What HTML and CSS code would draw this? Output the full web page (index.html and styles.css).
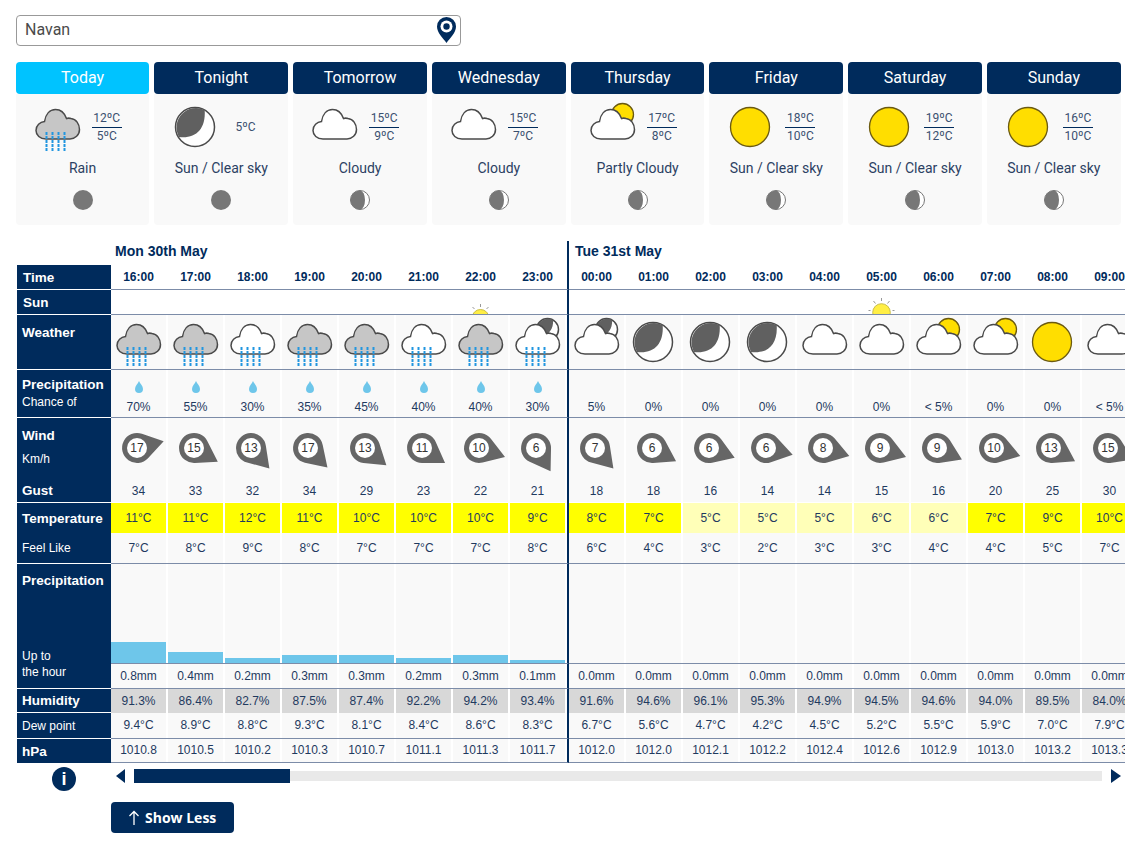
FILE: index.html
```html
<!DOCTYPE html>
<html lang="en">
<head>
    <meta charset="UTF-8">
    <meta name="viewport" content="width=device-width, initial-scale=1.0">
    <title>Navan - Forecast</title>
    <link rel="stylesheet" href="styles.css">
</head>
<body>
    <svg class="sprite" width="0" height="0">
        <defs>
            <path id="cloud-shape" d="M16 39C10 39 6 35 6 30.500 6 25.500 10 22 14.500 21.500 15.500 14.500 19.500 9.500 25.500 9.500 30.500 9.500 34.500 13 36.500 18.500 38 18 39.500 18 41 18.500 46 19 49.500 24 49.500 29.500 49.500 35 45 39 40 39Z"/>
            <path id="moon-shape" d="M36.700 10A19.500 19.500 0 0 0 11 37C27 39 38 30 36.700 10Z"/>
            <g id="rain-lines" class="rain">
                <path d="M16.500 32V51M22.500 32V51M28.500 32V51M34.500 32V51"/>
            </g>
            <symbol id="cloud" viewBox="0 0 55 54">
                <use href="#cloud-shape" class="cl-white"/>
            </symbol>
            <symbol id="rain-grey" viewBox="0 0 55 54">
                <use href="#cloud-shape" class="cl-grey"/>
                <use href="#rain-lines"/>
            </symbol>
            <symbol id="rain-white" viewBox="0 0 55 54">
                <use href="#cloud-shape" class="cl-white"/>
                <use href="#rain-lines"/>
            </symbol>
            <symbol id="sun" viewBox="0 0 55 54">
                <circle cx="27" cy="27" r="19.500" class="sun-fill"/>
            </symbol>
            <symbol id="moon" viewBox="0 0 55 54">
                <circle cx="27" cy="27" r="19.500" class="cl-white"/>
                <use href="#moon-shape" class="moon-dark"/>
            </symbol>
            <symbol id="part-sun" viewBox="0 0 55 54">
                <circle cx="37.500" cy="14.500" r="11" class="sun-fill"/>
                <use href="#cloud-shape" class="cl-white"/>
            </symbol>
            <g id="small-moon">
                <circle cx="37.500" cy="14.500" r="11" class="cl-white"/>
                <path d="M43 5A11 11 0 0 0 28.500 20.500C37 22 44 15 43 5Z" class="moon-dark"/>
            </g>
            <symbol id="part-moon" viewBox="0 0 55 54">
                <use href="#small-moon"/>
                <use href="#cloud-shape" class="cl-white"/>
            </symbol>
            <symbol id="rain-moon" viewBox="0 0 55 54">
                <use href="#small-moon"/>
                <use href="#cloud-shape" class="cl-white"/>
                <use href="#rain-lines"/>
            </symbol>
            <symbol id="phase-full" viewBox="0 0 20 20">
                <circle cx="10" cy="10" r="10" class="phase-dark"/>
            </symbol>
            <symbol id="phase-gibbous" viewBox="0 0 20 20">
                <circle cx="10" cy="10" r="9.500" class="phase-ring"/>
                <path d="M10 .5A9.500 9.500 0 0 0 10 19.500 5 9.500 0 0 0 10 .5Z" class="phase-dark"/>
            </symbol>
            <path id="pin" class="pin-shape" d="M8.200-12.600 27.500 0 8.200 12.600A15 15 0 1 1 8.200-12.600Z"/>
            <symbol id="drop" viewBox="0 0 8 12">
                <path d="M4 0C5 2.500 8 5 8 8A4 4 0 0 1 0 8C0 5 3 2.500 4 0Z" class="drop-fill"/>
            </symbol>
        </defs>
    </svg>

    <div class="search">
        <input type="text" class="search-input" value="Navan">
        <svg class="search-pin" viewBox="0 0 19 26">
            <path d="M9.500 0A9.500 9.500 0 0 0 0 9.500C0 16 6 21 9.500 26 13 21 19 16 19 9.500A9.500 9.500 0 0 0 9.500 0Z" fill="#002b5c"/>
            <circle cx="9.500" cy="9.500" r="6" fill="#fff"/>
            <circle cx="9.500" cy="9.500" r="3.200" fill="#002b5c"/>
        </svg>
    </div>

    <div class="cards">
        <div class="card">
            <div class="tab tab-active">Today</div>
            <div class="card-body">
                <div class="now">
                    <svg class="icon"><use href="#rain-grey"/></svg>
                    <div class="temps"><span class="hi">12ºC</span><span>5ºC</span></div>
                </div>
                <div class="cond">Rain</div>
                <svg class="phase"><use href="#phase-full"/></svg>
            </div>
        </div>
        <div class="card">
            <div class="tab">Tonight</div>
            <div class="card-body">
                <div class="now">
                    <svg class="icon"><use href="#moon"/></svg>
                    <div class="temps"><span>5ºC</span></div>
                </div>
                <div class="cond">Sun / Clear sky</div>
                <svg class="phase"><use href="#phase-full"/></svg>
            </div>
        </div>
        <div class="card">
            <div class="tab">Tomorrow</div>
            <div class="card-body">
                <div class="now">
                    <svg class="icon"><use href="#cloud"/></svg>
                    <div class="temps"><span class="hi">15ºC</span><span>9ºC</span></div>
                </div>
                <div class="cond">Cloudy</div>
                <svg class="phase"><use href="#phase-gibbous"/></svg>
            </div>
        </div>
        <div class="card">
            <div class="tab">Wednesday</div>
            <div class="card-body">
                <div class="now">
                    <svg class="icon"><use href="#cloud"/></svg>
                    <div class="temps"><span class="hi">15ºC</span><span>7ºC</span></div>
                </div>
                <div class="cond">Cloudy</div>
                <svg class="phase"><use href="#phase-gibbous"/></svg>
            </div>
        </div>
        <div class="card">
            <div class="tab">Thursday</div>
            <div class="card-body">
                <div class="now">
                    <svg class="icon"><use href="#part-sun"/></svg>
                    <div class="temps"><span class="hi">17ºC</span><span>8ºC</span></div>
                </div>
                <div class="cond">Partly Cloudy</div>
                <svg class="phase"><use href="#phase-gibbous"/></svg>
            </div>
        </div>
        <div class="card">
            <div class="tab">Friday</div>
            <div class="card-body">
                <div class="now">
                    <svg class="icon"><use href="#sun"/></svg>
                    <div class="temps"><span class="hi">18ºC</span><span>10ºC</span></div>
                </div>
                <div class="cond">Sun / Clear sky</div>
                <svg class="phase"><use href="#phase-gibbous"/></svg>
            </div>
        </div>
        <div class="card">
            <div class="tab">Saturday</div>
            <div class="card-body">
                <div class="now">
                    <svg class="icon"><use href="#sun"/></svg>
                    <div class="temps"><span class="hi">19ºC</span><span>12ºC</span></div>
                </div>
                <div class="cond">Sun / Clear sky</div>
                <svg class="phase"><use href="#phase-gibbous"/></svg>
            </div>
        </div>
        <div class="card">
            <div class="tab">Sunday</div>
            <div class="card-body">
                <div class="now">
                    <svg class="icon"><use href="#sun"/></svg>
                    <div class="temps"><span class="hi">16ºC</span><span>10ºC</span></div>
                </div>
                <div class="cond">Sun / Clear sky</div>
                <svg class="phase"><use href="#phase-gibbous"/></svg>
            </div>
        </div>
    </div>

    <div class="table">
        <div class="row r-date">
            <div class="label label-none"></div>
            <div class="data">
                <div class="day mon"><span class="date">Mon 30th May</span></div>
                <div class="day"><span class="date date-next">Tue 31st May</span></div>
            </div>
        </div>

        <div class="row r-time">
            <div class="label"><b class="ind">Time</b></div>
            <div class="data">
                <div class="day mon lined">
                    <div class="c">16:00</div><div class="c">17:00</div><div class="c">18:00</div><div class="c">19:00</div><div class="c">20:00</div><div class="c">21:00</div><div class="c">22:00</div><div class="c">23:00</div>
                </div>
                <div class="day lined">
                    <div class="c">00:00</div><div class="c">01:00</div><div class="c">02:00</div><div class="c">03:00</div><div class="c">04:00</div><div class="c">05:00</div><div class="c">06:00</div><div class="c">07:00</div><div class="c">08:00</div><div class="c">09:00</div>
                </div>
            </div>
        </div>

        <div class="row r-sun">
            <div class="label"><b class="ind">Sun</b></div>
            <div class="data">
                <div class="day mon lined">
                    <div class="c"></div><div class="c"></div><div class="c"></div><div class="c"></div><div class="c"></div><div class="c"></div>
                    <div class="c"><svg class="sunrise" viewBox="0 0 55 24"><circle cx="27.500" cy="28" r="8.500"/><path class="rays" d="M27.500 14V17M19.500 17 21.500 19M35.500 17 33.500 19"/></svg></div>
                    <div class="c"></div>
                </div>
                <div class="day lined">
                    <div class="c"></div><div class="c"></div><div class="c"></div><div class="c"></div><div class="c"></div>
                    <div class="c"><svg class="sunrise" viewBox="0 0 55 24"><circle cx="27.500" cy="22.500" r="8.800"/><path class="rays" d="M27.500 8V11M19.500 11 21.500 13.500M35.500 11 33.500 13.500M14.500 20.500H16.500M38.500 20.500H40.500"/></svg></div>
                    <div class="c"></div><div class="c"></div><div class="c"></div><div class="c"></div>
                </div>
            </div>
        </div>

        <div class="row r-weather">
            <div class="label"><b>Weather</b></div>
            <div class="data">
                <div class="day mon lined">
                    <div class="c"><svg><use href="#rain-grey"/></svg></div>
                    <div class="c"><svg><use href="#rain-grey"/></svg></div>
                    <div class="c"><svg><use href="#rain-white"/></svg></div>
                    <div class="c"><svg><use href="#rain-grey"/></svg></div>
                    <div class="c"><svg><use href="#rain-grey"/></svg></div>
                    <div class="c"><svg><use href="#rain-white"/></svg></div>
                    <div class="c"><svg><use href="#rain-grey"/></svg></div>
                    <div class="c"><svg><use href="#rain-moon"/></svg></div>
                </div>
                <div class="day lined">
                    <div class="c"><svg><use href="#part-moon"/></svg></div>
                    <div class="c"><svg><use href="#moon"/></svg></div>
                    <div class="c"><svg><use href="#moon"/></svg></div>
                    <div class="c"><svg><use href="#moon"/></svg></div>
                    <div class="c"><svg><use href="#cloud"/></svg></div>
                    <div class="c"><svg><use href="#cloud"/></svg></div>
                    <div class="c"><svg><use href="#part-sun"/></svg></div>
                    <div class="c"><svg><use href="#part-sun"/></svg></div>
                    <div class="c"><svg><use href="#sun"/></svg></div>
                    <div class="c"><svg><use href="#cloud"/></svg></div>
                </div>
            </div>
        </div>

        <div class="row r-chance">
            <div class="label"><b>Precipitation</b><span class="sub">Chance of</span></div>
            <div class="data">
                <div class="day mon lined">
                    <div class="c"><svg class="drop"><use href="#drop"/></svg>70%</div>
                    <div class="c"><svg class="drop"><use href="#drop"/></svg>55%</div>
                    <div class="c"><svg class="drop"><use href="#drop"/></svg>30%</div>
                    <div class="c"><svg class="drop"><use href="#drop"/></svg>35%</div>
                    <div class="c"><svg class="drop"><use href="#drop"/></svg>45%</div>
                    <div class="c"><svg class="drop"><use href="#drop"/></svg>40%</div>
                    <div class="c"><svg class="drop"><use href="#drop"/></svg>40%</div>
                    <div class="c"><svg class="drop"><use href="#drop"/></svg>30%</div>
                </div>
                <div class="day lined">
                    <div class="c">5%</div><div class="c">0%</div><div class="c">0%</div><div class="c">0%</div><div class="c">0%</div><div class="c">0%</div><div class="c">&lt; 5%</div><div class="c">0%</div><div class="c">0%</div><div class="c">&lt; 5%</div>
                </div>
            </div>
        </div>

        <div class="row r-wind">
            <div class="label"><b>Wind</b><span class="sub">Km/h</span><b class="gust-label">Gust</b></div>
            <div class="data">
                <div class="day mon">
                    <div class="c"><svg class="wind" viewBox="-26 -30 55 60"><use href="#pin" transform="rotate(-14)"/><circle r="10"/><text y="4">17</text></svg><span class="gust">34</span></div>
                    <div class="c"><svg class="wind" viewBox="-26 -30 55 60"><use href="#pin" transform="rotate(30)"/><circle r="10"/><text y="4">15</text></svg><span class="gust">33</span></div>
                    <div class="c"><svg class="wind" viewBox="-26 -30 55 60"><use href="#pin" transform="rotate(48)"/><circle r="10"/><text y="4">13</text></svg><span class="gust">32</span></div>
                    <div class="c"><svg class="wind" viewBox="-26 -30 55 60"><use href="#pin" transform="rotate(45)"/><circle r="10"/><text y="4">17</text></svg><span class="gust">34</span></div>
                    <div class="c"><svg class="wind" viewBox="-26 -30 55 60"><use href="#pin" transform="rotate(39)"/><circle r="10"/><text y="4">13</text></svg><span class="gust">29</span></div>
                    <div class="c"><svg class="wind" viewBox="-26 -30 55 60"><use href="#pin" transform="rotate(33)"/><circle r="10"/><text y="4">11</text></svg><span class="gust">23</span></div>
                    <div class="c"><svg class="wind" viewBox="-26 -30 55 60"><use href="#pin" transform="rotate(19)"/><circle r="10"/><text y="4">10</text></svg><span class="gust">22</span></div>
                    <div class="c"><svg class="wind" viewBox="-26 -30 55 60"><use href="#pin" transform="rotate(58)"/><circle r="10"/><text y="4">6</text></svg><span class="gust">21</span></div>
                </div>
                <div class="day">
                    <div class="c"><svg class="wind" viewBox="-26 -30 55 60"><use href="#pin" transform="rotate(48)"/><circle r="10"/><text y="4">7</text></svg><span class="gust">18</span></div>
                    <div class="c"><svg class="wind" viewBox="-26 -30 55 60"><use href="#pin" transform="rotate(29)"/><circle r="10"/><text y="4">6</text></svg><span class="gust">18</span></div>
                    <div class="c"><svg class="wind" viewBox="-26 -30 55 60"><use href="#pin" transform="rotate(21)"/><circle r="10"/><text y="4">6</text></svg><span class="gust">16</span></div>
                    <div class="c"><svg class="wind" viewBox="-26 -30 55 60"><use href="#pin" transform="rotate(14)"/><circle r="10"/><text y="4">6</text></svg><span class="gust">14</span></div>
                    <div class="c"><svg class="wind" viewBox="-26 -30 55 60"><use href="#pin" transform="rotate(17)"/><circle r="10"/><text y="4">8</text></svg><span class="gust">14</span></div>
                    <div class="c"><svg class="wind" viewBox="-26 -30 55 60"><use href="#pin" transform="rotate(19)"/><circle r="10"/><text y="4">9</text></svg><span class="gust">15</span></div>
                    <div class="c"><svg class="wind" viewBox="-26 -30 55 60"><use href="#pin" transform="rotate(25)"/><circle r="10"/><text y="4">9</text></svg><span class="gust">16</span></div>
                    <div class="c"><svg class="wind" viewBox="-26 -30 55 60"><use href="#pin" transform="rotate(17)"/><circle r="10"/><text y="4">10</text></svg><span class="gust">20</span></div>
                    <div class="c"><svg class="wind" viewBox="-26 -30 55 60"><use href="#pin" transform="rotate(29)"/><circle r="10"/><text y="4">13</text></svg><span class="gust">25</span></div>
                    <div class="c"><svg class="wind" viewBox="-26 -30 55 60"><use href="#pin" transform="rotate(25)"/><circle r="10"/><text y="4">15</text></svg><span class="gust">30</span></div>
                </div>
            </div>
        </div>

        <div class="row r-temp">
            <div class="label"><b>Temperature</b></div>
            <div class="data">
                <div class="day mon">
                    <div class="c">11°C</div><div class="c">11°C</div><div class="c">12°C</div><div class="c">11°C</div><div class="c">10°C</div><div class="c">10°C</div><div class="c">10°C</div><div class="c">9°C</div>
                </div>
                <div class="day">
                    <div class="c">8°C</div><div class="c">7°C</div><div class="c pale">5°C</div><div class="c pale">5°C</div><div class="c pale">5°C</div><div class="c pale">6°C</div><div class="c pale">6°C</div><div class="c">7°C</div><div class="c">9°C</div><div class="c">10°C</div>
                </div>
            </div>
        </div>

        <div class="row r-feel">
            <div class="label"><span>Feel Like</span></div>
            <div class="data">
                <div class="day mon lined">
                    <div class="c">7°C</div><div class="c">8°C</div><div class="c">9°C</div><div class="c">8°C</div><div class="c">7°C</div><div class="c">7°C</div><div class="c">7°C</div><div class="c">8°C</div>
                </div>
                <div class="day lined">
                    <div class="c">6°C</div><div class="c">4°C</div><div class="c">3°C</div><div class="c">2°C</div><div class="c">3°C</div><div class="c">3°C</div><div class="c">4°C</div><div class="c">4°C</div><div class="c">5°C</div><div class="c">7°C</div>
                </div>
            </div>
        </div>

        <div class="row r-chart">
            <div class="label"><b>Precipitation</b><span class="upto">Up to</span></div>
            <div class="data">
                <div class="day mon lined">
                    <div class="c"><div class="bar" style="height:21px"></div></div>
                    <div class="c"><div class="bar" style="height:11px"></div></div>
                    <div class="c"><div class="bar" style="height:5px"></div></div>
                    <div class="c"><div class="bar" style="height:8px"></div></div>
                    <div class="c"><div class="bar" style="height:8px"></div></div>
                    <div class="c"><div class="bar" style="height:5px"></div></div>
                    <div class="c"><div class="bar" style="height:8px"></div></div>
                    <div class="c"><div class="bar" style="height:3px"></div></div>
                </div>
                <div class="day lined">
                    <div class="c"></div><div class="c"></div><div class="c"></div><div class="c"></div><div class="c"></div><div class="c"></div><div class="c"></div><div class="c"></div><div class="c"></div><div class="c"></div>
                </div>
            </div>
        </div>

        <div class="row r-amount">
            <div class="label"><span class="hour">the hour</span></div>
            <div class="data">
                <div class="day mon lined">
                    <div class="c">0.8mm</div><div class="c">0.4mm</div><div class="c">0.2mm</div><div class="c">0.3mm</div><div class="c">0.3mm</div><div class="c">0.2mm</div><div class="c">0.3mm</div><div class="c">0.1mm</div>
                </div>
                <div class="day lined">
                    <div class="c">0.0mm</div><div class="c">0.0mm</div><div class="c">0.0mm</div><div class="c">0.0mm</div><div class="c">0.0mm</div><div class="c">0.0mm</div><div class="c">0.0mm</div><div class="c">0.0mm</div><div class="c">0.0mm</div><div class="c">0.0mm</div>
                </div>
            </div>
        </div>

        <div class="row r-humidity">
            <div class="label"><b>Humidity</b></div>
            <div class="data">
                <div class="day mon">
                    <div class="c">91.3%</div><div class="c">86.4%</div><div class="c">82.7%</div><div class="c">87.5%</div><div class="c">87.4%</div><div class="c">92.2%</div><div class="c">94.2%</div><div class="c">93.4%</div>
                </div>
                <div class="day">
                    <div class="c">91.6%</div><div class="c">94.6%</div><div class="c">96.1%</div><div class="c">95.3%</div><div class="c">94.9%</div><div class="c">94.5%</div><div class="c">94.6%</div><div class="c">94.0%</div><div class="c">89.5%</div><div class="c">84.0%</div>
                </div>
            </div>
        </div>

        <div class="row r-dew">
            <div class="label"><span>Dew point</span></div>
            <div class="data">
                <div class="day mon lined">
                    <div class="c">9.4°C</div><div class="c">8.9°C</div><div class="c">8.8°C</div><div class="c">9.3°C</div><div class="c">8.1°C</div><div class="c">8.4°C</div><div class="c">8.6°C</div><div class="c">8.3°C</div>
                </div>
                <div class="day lined">
                    <div class="c">6.7°C</div><div class="c">5.6°C</div><div class="c">4.7°C</div><div class="c">4.2°C</div><div class="c">4.5°C</div><div class="c">5.2°C</div><div class="c">5.5°C</div><div class="c">5.9°C</div><div class="c">7.0°C</div><div class="c">7.9°C</div>
                </div>
            </div>
        </div>

        <div class="row r-hpa">
            <div class="label"><b>hPa</b></div>
            <div class="data">
                <div class="day mon lined">
                    <div class="c">1010.8</div><div class="c">1010.5</div><div class="c">1010.2</div><div class="c">1010.3</div><div class="c">1010.7</div><div class="c">1011.1</div><div class="c">1011.3</div><div class="c">1011.7</div>
                </div>
                <div class="day lined">
                    <div class="c">1012.0</div><div class="c">1012.0</div><div class="c">1012.1</div><div class="c">1012.2</div><div class="c">1012.4</div><div class="c">1012.6</div><div class="c">1012.9</div><div class="c">1013.0</div><div class="c">1013.2</div><div class="c">1013.3</div>
                </div>
            </div>
        </div>
    </div>

    <div class="under">
        <div class="info-col"><div class="info">i</div></div>
        <div class="scroll">
            <div class="arrow-left"></div>
            <div class="track"><div class="thumb"></div></div>
            <div class="arrow-right"></div>
        </div>
    </div>

    <button type="button" class="show-less">
        <svg class="up" viewBox="0 0 12 16"><path d="M6 15V1.500M1.500 6 6 1.500 10.500 6"/></svg>
        Show Less
    </button>
</body>
</html>
```

FILE: styles.css
```css
* {
    box-sizing: border-box;
}
body {
    margin: 0;
    padding: 15px 0 0 16px;
    background: #fff;
    font-family: "Liberation Sans", Arial, sans-serif;
    color: #1f3a5f;
    overflow: hidden;
}
.sprite {
    position: absolute;
}

/* search box */
.search {
    position: relative;
    width: 445px;
    height: 31px;
    margin-bottom: 16px;
}
.search-input {
    width: 100%;
    height: 100%;
    padding: 0 8px 2px;
    border: 1px solid #999;
    border-radius: 4px;
    font-family: Roboto, sans-serif;
    font-size: 16px;
    color: #4a4a4a;
}
.search-pin {
    position: absolute;
    top: 2px;
    right: 5px;
    width: 19px;
    height: 26px;
}

/* day cards */
.cards {
    display: grid;
    grid-template-columns: repeat(8, 1fr);
    gap: 5px;
    width: 1105px;
    margin: 0 0 16px -0.3px;
    font-family: Roboto, sans-serif;
}
.tab {
    height: 32px;
    background-color: #002b5c;
    border-radius: 4px;
    color: #fff;
    font-size: 16px;
    line-height: 31px;
    text-align: center;
}
.tab-active {
    background-color: #00c3ff;
}
.card-body {
    height: 131px;
    padding-top: 6px;
    background-color: #f9f9f9;
    border-radius: 0 0 4px 4px;
    text-align: center;
}
.now {
    display: flex;
    align-items: center;
    height: 54px;
    padding-left: 14px;
}
.icon {
    width: 55px;
    height: 54px;
}
.temps {
    display: flex;
    flex-direction: column;
    width: 30px;
    margin-left: 7px;
    font-size: 12px;
    line-height: 17px;
    color: #3a5070;
}
.temps .hi {
    border-bottom: 1px solid #002b5c;
}
.cond {
    margin-top: 4px;
    font-size: 14px;
    line-height: 20px;
    color: #2c4163;
}
.phase {
    display: block;
    width: 20px;
    height: 20px;
    margin: 12px auto 0;
}
.phase-dark {
    fill: #777;
}
.phase-ring {
    fill: #fff;
    stroke: #777;
}

/* icon parts */
.cl-white, .cl-grey {
    fill: #fff;
    stroke: #4a4a4a;
    stroke-width: 1.500;
}
.cl-grey {
    fill: #c6c6c6;
}
.rain {
    fill: none;
    stroke: #2196e0;
    stroke-width: 2;
    stroke-dasharray: 3 1;
}
.sun-fill {
    fill: #ffde00;
    stroke: #6b5a10;
    stroke-width: 1.300;
}
.moon-dark {
    fill: #606060;
}
.drop-fill {
    fill: #6ec6ea;
}
.pin-shape {
    fill: #666;
}

/* forecast table */
.table {
    width: 1108px;
    margin-left: 1px;
}
.row {
    display: flex;
}
.label {
    flex: none;
    display: flex;
    flex-direction: column;
    width: 94px;
    margin-bottom: 1px;
    padding: 0 0 0 5px;
    background-color: #002b5c;
    color: #fff;
    font-size: 12px;
}
.label b {
    font-size: 13.500px;
}
.label .ind {
    padding-left: 1px;
}
.label-none {
    background: none;
    margin: 0;
}
.data {
    display: flex;
    flex: 1;
    min-width: 0;
    overflow: hidden;
}
.day {
    flex: none;
    display: flex;
    width: 570px;
}
.mon {
    width: 458px;
    border-right: 2px solid #002b5c;
}
.lined {
    border-bottom: 1px solid #7c8ca8;
}
.c {
    flex: none;
    width: 55px;
    margin-right: 2px;
    background-color: #f9f9f9;
    font-size: 12px;
    text-align: center;
}

.r-date {
    height: 24px;
}
.date {
    padding: 2px 0 0 4px;
    color: #002b5c;
    font-size: 14px;
    font-weight: bold;
}
.date-next {
    padding-left: 6px;
}

.r-time {
    height: 25px;
}
.r-time .label, .r-sun .label {
    justify-content: center;
}
.r-time .c {
    background: none;
    color: #002b5c;
    font-weight: bold;
    line-height: 24px;
}

.r-sun {
    height: 25px;
}
.r-sun .c {
    background: none;
}
.sunrise {
    display: block;
    width: 55px;
    height: 24px;
}
.sunrise circle {
    fill: #ffee44;
    stroke: #c9bd4a;
}
.rays {
    fill: none;
    stroke: #999;
}

.r-weather {
    height: 55px;
}
.r-weather .label {
    padding-top: 10px;
}
.r-weather svg {
    display: block;
    width: 55px;
    height: 54px;
}

.r-chance {
    height: 48px;
}
.r-chance .label {
    padding-top: 7px;
}
.sub {
    margin-top: 3px;
}
.r-chance .c {
    display: flex;
    flex-direction: column;
    align-items: center;
    justify-content: flex-end;
    padding-bottom: 2px;
    line-height: 16px;
}
.drop {
    width: 8px;
    height: 12px;
    margin-bottom: 6px;
}

.r-wind {
    height: 85px;
}
.r-wind .label {
    padding-top: 10px;
}
.r-wind .sub {
    margin-top: 9px;
}
.gust-label {
    margin-top: 17px;
}
.r-wind .c {
    background: none;
}
.wind {
    display: block;
    width: 55px;
    height: 60px;
    background-color: #f9f9f9;
}
.wind circle {
    fill: #fff;
}
.wind text {
    fill: #333;
    font-family: "Liberation Sans", Arial, sans-serif;
    font-size: 12px;
    text-anchor: middle;
}
.gust {
    display: block;
    height: 24px;
    background-color: #f9f9f9;
    line-height: 26px;
}

.r-temp {
    height: 30px;
}
.r-temp .label {
    justify-content: center;
    margin: 0;
}
.r-temp .c {
    background-color: #ffff00;
    line-height: 30px;
}
.r-temp .pale {
    background-color: #ffffb8;
}

.r-feel {
    height: 31px;
}
.r-feel .label {
    justify-content: center;
}
.r-feel .c {
    line-height: 30px;
}

.r-chart {
    height: 100px;
}
.r-chart .label {
    margin: 0;
    padding-top: 9px;
}
.upto {
    margin-top: auto;
    line-height: 16px;
}
.r-chart .c {
    display: flex;
    align-items: flex-end;
}
.bar {
    width: 55px;
    background-color: #6ec6ea;
}

.r-amount {
    height: 25px;
}
.hour {
    line-height: 16px;
}
.r-amount .c {
    line-height: 24px;
}

.r-humidity {
    height: 24px;
}
.r-humidity .label {
    justify-content: center;
}
.r-humidity .c {
    background-color: #d8d8d8;
    line-height: 24px;
}

.r-dew {
    height: 26px;
}
.r-dew .label {
    justify-content: center;
}
.r-dew .c {
    line-height: 25px;
}

.r-hpa {
    height: 24px;
}
.r-hpa .label {
    justify-content: center;
    margin: 0;
}
.r-hpa .c {
    line-height: 23px;
}

/* below the table */
.under {
    display: flex;
    margin-left: 1px;
}
.info-col {
    width: 94px;
    padding-top: 4px;
}
.info {
    width: 24px;
    height: 24px;
    margin: 0 auto;
    background-color: #002b5c;
    border-radius: 50%;
    color: #fff;
    font-size: 18px;
    font-weight: bold;
    line-height: 24px;
    text-align: center;
}
.scroll {
    display: flex;
    align-items: center;
    height: 15px;
    margin-top: 5px;
    padding-left: 5px;
}
.arrow-left {
    border-top: 7.500px solid transparent;
    border-bottom: 7.500px solid transparent;
    border-right: 9px solid #002b5c;
}
.arrow-right {
    border-top: 7.500px solid transparent;
    border-bottom: 7.500px solid transparent;
    border-left: 10px solid #002b5c;
}
.track {
    position: relative;
    width: 968px;
    height: 10px;
    margin: 0 9px;
    background-color: #e9e9e9;
}
.thumb {
    position: absolute;
    top: -2px;
    left: 0;
    width: 156px;
    height: 14px;
    background-color: #002b5c;
}
.show-less {
    display: flex;
    align-items: center;
    gap: 5px;
    width: 123px;
    height: 31px;
    margin: 11px 0 0 95px;
    padding: 0 0 0 17px;
    background-color: #002b5c;
    border: none;
    border-radius: 4px;
    color: #fff;
    font-family: "Open Sans", sans-serif;
    font-size: 14px;
    font-weight: 700;
    cursor: pointer;
}
.up {
    width: 12px;
    height: 16px;
    fill: none;
    stroke: #fff;
    stroke-width: 1.300;
}
```
